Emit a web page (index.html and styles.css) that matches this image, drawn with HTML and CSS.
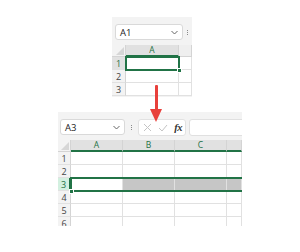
FILE: index.html
```html
<!DOCTYPE html>
<html>
<head>
<meta charset="utf-8">
<link rel="stylesheet" href="styles.css">
</head>
<body>
<div class="page">
  <div class="snip snip-top">
    <div class="toolbar">
      <div class="namebox nb-top"><span>A1</span><svg class="chev" width="7" height="5" viewBox="0 0 7 5"><path d="M0.5 1 L3.5 4 L6.5 1" fill="none" stroke="#666" stroke-width="1"/></svg></div>
      <div class="dots"><i></i><i></i><i></i></div>
    </div>
    <div class="grid g-top">
      <div class="row hrow">
        <div class="rh corner"><svg width="8" height="8" viewBox="0 0 8 8"><path d="M8 0 L8 8 L0 8 Z" fill="#d6d6d6"/></svg></div>
        <div class="ch sel colA">A</div>
        <div class="ch rest"></div>
      </div>
      <div class="row">
        <div class="rh selrh">1</div>
        <div class="c colA"></div>
        <div class="c rest"></div>
      </div>
      <div class="row">
        <div class="rh">2</div>
        <div class="c colA"></div>
        <div class="c rest"></div>
      </div>
      <div class="row">
        <div class="rh">3</div>
        <div class="c colA"></div>
        <div class="c rest"></div>
      </div>
      <div class="selcell"><span class="handle h-br"></span></div>
    </div>
  </div>

  <div class="snip snip-bot">
    <div class="toolbar">
      <div class="namebox nb-bot"><span>A3</span><svg class="chev" width="7" height="5" viewBox="0 0 7 5"><path d="M0.5 1 L3.5 4 L6.5 1" fill="none" stroke="#666" stroke-width="1"/></svg></div>
      <div class="dots"><i></i><i></i><i></i></div>
      <div class="fbtns">
        <svg width="9" height="9" viewBox="0 0 9 9"><path d="M1 1 L8 8 M8 1 L1 8" stroke="#c4c4c4" stroke-width="1" fill="none"/></svg>
        <svg width="10" height="8" viewBox="0 0 10 8"><path d="M1 4 L4 7 L9 1" stroke="#c4c4c4" stroke-width="1" fill="none"/></svg>
        <span class="fx">fx</span>
      </div>
      <div class="finput"></div>
    </div>
    <div class="grid g-bot">
      <div class="row hrow">
        <div class="rh corner"><svg width="8" height="8" viewBox="0 0 8 8"><path d="M8 0 L8 8 L0 8 Z" fill="#d6d6d6"/></svg></div>
        <div class="ch sel col">A</div>
        <div class="ch sel col">B</div>
        <div class="ch sel col">C</div>
        <div class="ch sel rest"></div>
      </div>
      <div class="row"><div class="rh">1</div><div class="c col"></div><div class="c col"></div><div class="c col"></div><div class="c rest"></div></div>
      <div class="row"><div class="rh">2</div><div class="c col"></div><div class="c col"></div><div class="c col"></div><div class="c rest"></div></div>
      <div class="row r3"><div class="rh selrh3">3</div><div class="c col"></div><div class="c col fill"></div><div class="c col fill"></div><div class="c rest fill"></div></div>
      <div class="row"><div class="rh">4</div><div class="c col"></div><div class="c col"></div><div class="c col"></div><div class="c rest"></div></div>
      <div class="row"><div class="rh">5</div><div class="c col"></div><div class="c col"></div><div class="c col"></div><div class="c rest"></div></div>
      <div class="row"><div class="rh">6</div><div class="c col"></div><div class="c col"></div><div class="c col"></div><div class="c rest"></div></div>
      <div class="selrow"><span class="handle h-bl"></span></div>
    </div>
  </div>

  <div class="arrow"><div class="shaft"></div><div class="head"></div></div>
</div>
</body>
</html>
```

FILE: styles.css
```css
* { box-sizing: border-box; }
html, body { margin: 0; padding: 0; background: #fff; }
body { width: 300px; height: 252px; overflow: hidden; font-family: "Open Sans", "Noto Sans", sans-serif; }
.page { position: relative; width: 300px; height: 252px; padding-top: 17px; display: flex; flex-direction: column; }

.snip { background: #f3f3f3; overflow: hidden; display: flex; flex-direction: column; flex: none; }
.snip-top { margin-left: 112px; width: 80px; height: 80px; }
.snip-bot { margin-left: 58px; margin-top: 15px; width: 184px; height: 114px; }

.toolbar { height: 28px; flex: none; display: flex; align-items: flex-start; padding-top: 7px; }
.toolbar > * { flex: none; }
.snip-top .toolbar { padding-left: 3px; }
.snip-bot .toolbar { padding-left: 2px; }

.namebox { height: 16px; background: #fff; border: 1px solid #d9d9d9; border-radius: 3px; display: flex; align-items: center; justify-content: space-between; padding: 0 4px 0 4px; font-size: 9.5px; color: #222; }
.nb-top { width: 68px; }
.nb-bot { width: 65px; }
.chev { display: block; }

.dots { width: 9px; height: 16px; display: flex; flex-direction: column; align-items: center; justify-content: center; gap: 1px; }
.dots i { display: block; width: 1px; height: 1px; background: #8a8a8a; }
.snip-bot .dots { width: 13px; }

.fbtns { width: 48px; height: 17px; background: #fff; border: 1px solid #e2e2e2; border-radius: 3px; display: flex; align-items: center; justify-content: space-between; padding: 0 3px 0 4px; }
.fbtns svg { display: block; }
.fx { font-family: "Liberation Serif", "DejaVu Serif", serif; font-style: italic; font-weight: bold; font-size: 10.5px; color: #333; letter-spacing: -0.5px; }
.finput { margin-left: 3px; width: 80px; height: 17px; background: #fff; border: 1px solid #e0e0e0; border-radius: 3px; }

.grid { position: relative; flex: 1; display: flex; flex-direction: column; }
.row { display: flex; height: 13px; flex: none; }
.hrow { height: 12px; }
.rh { width: 14px; flex: none; background: #f3f3f3; border-right: 1px solid #d4d4d4; border-bottom: 1px solid #e1e1e1; font-size: 9px; color: #444; display: flex; align-items: center; justify-content: center; line-height: 1; }
.g-bot .rh { width: 13px; }
.corner { align-items: flex-end; justify-content: flex-end; padding: 0 1px 1px 0; border-bottom: 1px solid #d4d4d4; }
.corner svg { display: block; }
.ch { background: #efefef; border-right: 1px solid #d4d4d4; border-bottom: 1px solid #d4d4d4; font-size: 8.5px; color: #444; display: flex; align-items: center; justify-content: center; line-height: 1; }
.ch.sel { background: #e1e1e1; color: #1e7145; border-bottom: 2px solid #217346; }
.c { background: #fff; border-right: 1px solid #e1e1e1; border-bottom: 1px solid #e1e1e1; }
.colA { width: 53px; flex: none; }
.col { width: 52px; flex: none; }
.rest { flex: 1; }
.selrh { background: #e1e1e1; color: #1e7145; }
.selrh3 { background: #d3f0e0; color: #1e7145; border-right: 2px solid #217346; }
.fill { background: #c6c6c6; }

.selcell { position: absolute; left: 13px; top: 11px; width: 55px; height: 15px; border: 2px solid #217346; }
.selrow { position: absolute; left: 12px; top: 37px; width: 180px; height: 15px; border: 2px solid #217346; }
.handle { position: absolute; width: 5px; height: 5px; background: #217346; border: 1px solid #fff; }
.h-br { right: -4px; bottom: -4px; }
.h-bl { left: -3px; bottom: -4px; }

.arrow { position: absolute; left: 150px; top: 85px; width: 12px; height: 37px; display: flex; flex-direction: column; align-items: center; }
.shaft { width: 3px; height: 24px; background: #e8403b; border-radius: 1px 1px 0 0; }
.head { width: 0; height: 0; border-left: 6px solid transparent; border-right: 6px solid transparent; border-top: 13px solid #e8403b; }
```
